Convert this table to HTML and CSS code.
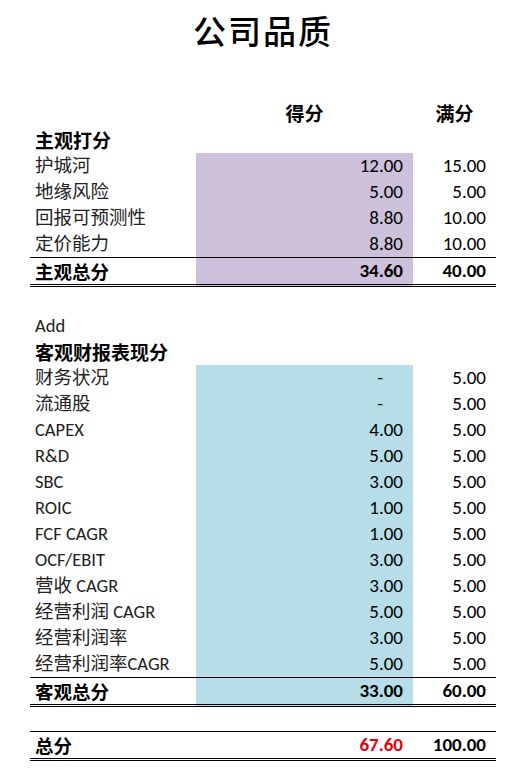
FILE: index.html
```html
<!DOCTYPE html>
<html lang="zh">
<head>
<meta charset="utf-8">
<title>公司品质</title>
<link rel="stylesheet" href="styles.css">
</head>
<body>
<div class="sheet">
  <h1 class="title">公司品质</h1>
  <table class="grid">
    <colgroup>
      <col class="c-label">
      <col class="c-score">
      <col class="c-max">
    </colgroup>
    <tr class="head">
      <td></td>
      <td class="ctr">得分</td>
      <td class="ctr">满分</td>
    </tr>
    <tr class="section"><td colspan="3">主观打分</td></tr>
    <tr><td class="lbl">护城河</td><td class="num purple">12.00</td><td class="num">15.00</td></tr>
    <tr><td class="lbl">地缘风险</td><td class="num purple">5.00</td><td class="num">5.00</td></tr>
    <tr><td class="lbl">回报可预测性</td><td class="num purple">8.80</td><td class="num">10.00</td></tr>
    <tr><td class="lbl">定价能力</td><td class="num purple">8.80</td><td class="num">10.00</td></tr>
    <tr class="total"><td class="lbl">主观总分</td><td class="num purple">34.60</td><td class="num">40.00</td></tr>
    <tr class="blank"><td colspan="3"></td></tr>
    <tr><td class="lbl latin" colspan="3">Add</td></tr>
    <tr class="section"><td colspan="3">客观财报表现分</td></tr>
    <tr><td class="lbl">财务状况</td><td class="num blue dash">-</td><td class="num">5.00</td></tr>
    <tr><td class="lbl">流通股</td><td class="num blue dash">-</td><td class="num">5.00</td></tr>
    <tr><td class="lbl">CAPEX</td><td class="num blue">4.00</td><td class="num">5.00</td></tr>
    <tr><td class="lbl">R&amp;D</td><td class="num blue">5.00</td><td class="num">5.00</td></tr>
    <tr><td class="lbl">SBC</td><td class="num blue">3.00</td><td class="num">5.00</td></tr>
    <tr><td class="lbl">ROIC</td><td class="num blue">1.00</td><td class="num">5.00</td></tr>
    <tr><td class="lbl">FCF CAGR</td><td class="num blue">1.00</td><td class="num">5.00</td></tr>
    <tr><td class="lbl">OCF/EBIT</td><td class="num blue">3.00</td><td class="num">5.00</td></tr>
    <tr><td class="lbl">营收 CAGR</td><td class="num blue">3.00</td><td class="num">5.00</td></tr>
    <tr><td class="lbl">经营利润 CAGR</td><td class="num blue">5.00</td><td class="num">5.00</td></tr>
    <tr><td class="lbl">经营利润率</td><td class="num blue">3.00</td><td class="num">5.00</td></tr>
    <tr><td class="lbl">经营利润率CAGR</td><td class="num blue">5.00</td><td class="num">5.00</td></tr>
    <tr class="total"><td class="lbl">客观总分</td><td class="num blue">33.00</td><td class="num">60.00</td></tr>
    <tr class="blank short"><td colspan="3"></td></tr>
    <tr class="total"><td class="lbl">总分</td><td class="num red">67.60</td><td class="num">100.00</td></tr>
  </table>
</div>
</body>
</html>
```

FILE: styles.css
```css
html, body {
  margin: 0;
  padding: 0;
  background: #ffffff;
}

.sheet {
  padding: 0 13px 0 30px;
  color: #111111;
  font-family: "Carlito", "Lato", "Noto Sans CJK SC", sans-serif;
}

.title {
  margin: 0;
  padding-top: 9px;
  height: 90px;
  box-sizing: border-box;
  width: 466px;
  text-align: center;
  font-family: "Noto Sans CJK SC", sans-serif;
  font-weight: 500;
  font-size: 33px;
  line-height: 42px;
  letter-spacing: 2px;
  color: #000;
}

.grid {
  width: 466px;
  border-collapse: collapse;
  table-layout: fixed;
  margin-top: 9px;
}

.c-label { width: 166px; }
.c-score { width: 217px; }
.c-max { width: 83px; }

.grid td {
  padding: 0;
  height: 26px;
  line-height: 26px;
  white-space: nowrap;
  font-size: 18px;
}

.grid .head td {
  height: 28px;
  line-height: 28px;
  font-family: "Noto Sans CJK SC", sans-serif;
  font-weight: 700;
  font-size: 19px;
  color: #000;
}

.ctr { text-align: center; }

.grid .section td {
  padding-left: 5px;
  font-family: "Noto Sans CJK SC", sans-serif;
  font-weight: 700;
  font-size: 19px;
  color: #000;
}

.lbl {
  padding-left: 5px !important;
  font-family: "Carlito", "Lato", "Noto Sans CJK SC", sans-serif;
  font-size: 18.5px !important;
  color: #222;
}

.num {
  text-align: right;
  padding-right: 10px !important;
  font-family: "Carlito", "Lato", sans-serif;
  font-size: 19px !important;
  color: #000;
}

.dash {
  padding-right: 30px !important;
}

.purple { background: #ccc0da; }
.blue { background: #b7dee8; }

.grid .total td {
  border-top: 1px solid #000;
  border-bottom: 3px double #000;
  font-weight: 700;
  color: #000;
}

.grid .total .lbl {
  font-family: "Noto Sans CJK SC", sans-serif;
  font-size: 18.5px;
}

.grid .total .num.red { color: #e8000b; }

.grid .blank td { height: 26px; }
.grid .blank.short td { height: 24px; }
```
